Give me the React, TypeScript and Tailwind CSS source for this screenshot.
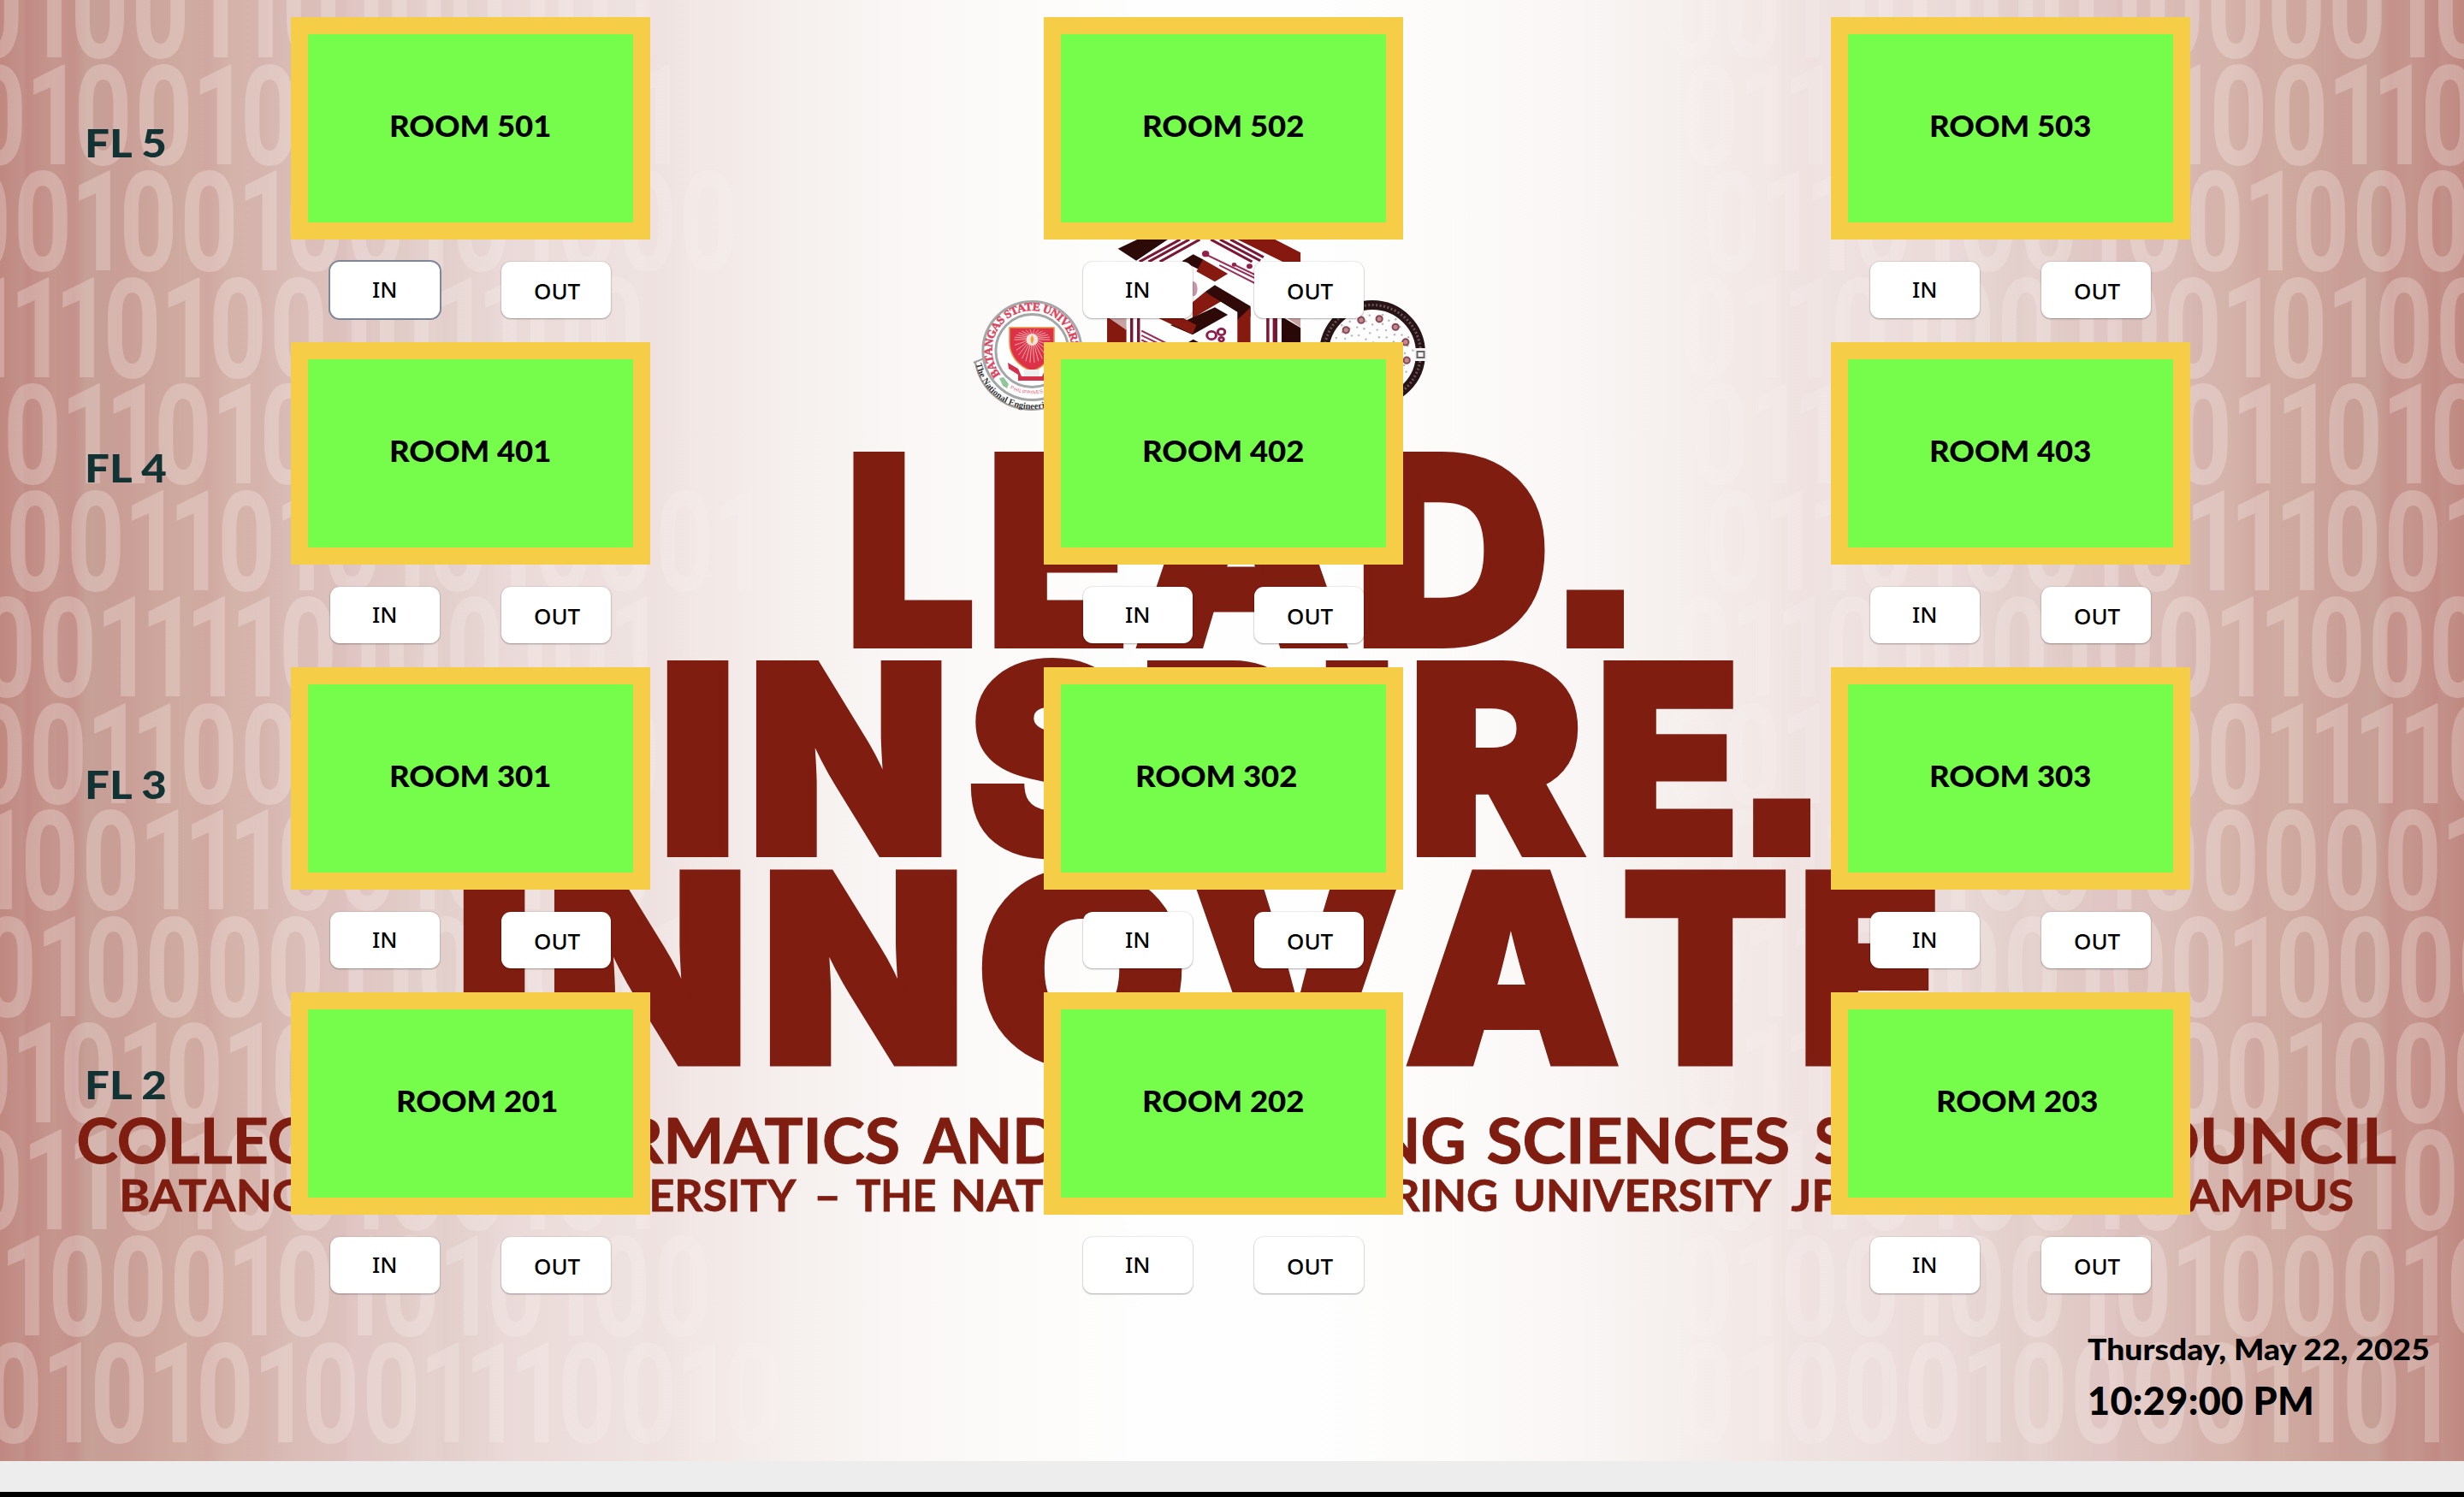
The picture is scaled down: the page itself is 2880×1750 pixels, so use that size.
import React from "react";

/* ---------- glyph fitting for the poster artwork ---------- */

const canvas = document.createElement("canvas");
const ctx = canvas.getContext("2d")!;

type Span = { text: string; from: number; to: number };

const inkOf = (font: string, text: string) => {
  ctx.font = font;
  const m = ctx.measureText(text);
  return {
    advance: m.width,
    left: m.actualBoundingBoxLeft,
    width: m.actualBoundingBoxLeft + m.actualBoundingBoxRight,
    height: m.actualBoundingBoxAscent + m.actualBoundingBoxDescent,
  };
};

/** The poster's full stops are square blocks, 69 units high. */
const DOT_FACE = "Liberation Sans";
const DOT_HEIGHT = 69;

/** Scales every span so that its ink runs from `from` to `to`. */
function FittedLine({
  spans,
  baseline,
  family,
  weight,
  size,
  stroke = 0,
  fill,
}: {
  spans: Span[];
  baseline: number;
  family: string;
  weight: number;
  size: number;
  stroke?: number;
  fill: string;
}) {
  return (
    <text
      y={baseline}
      fontFamily={family}
      fontWeight={weight}
      fontSize={size}
      fill={fill}
      stroke={stroke ? fill : "none"}
      strokeWidth={stroke}
      strokeLinejoin="miter"
    >
      {spans.map((s, i) => {
        const dot = s.text === ".";
        const dotSize = dot
          ? (100 * (DOT_HEIGHT - stroke)) / inkOf(`700 100px "${DOT_FACE}"`, ".").height
          : 0;
        const ink = dot
          ? inkOf(`700 ${dotSize}px "${DOT_FACE}"`, ".")
          : inkOf(`${weight} ${size}px "${family}"`, s.text);
        const k = (s.to - s.from - stroke) / ink.width;
        return (
          <tspan
            key={i}
            x={s.from + stroke / 2 + ink.left * k}
            textLength={ink.advance * k}
            lengthAdjust="spacingAndGlyphs"
            {...(dot ? { fontFamily: DOT_FACE, fontWeight: 700, fontSize: dotSize } : {})}
          >
            {s.text}
          </tspan>
        );
      })}
    </text>
  );
}

const MAROON = "#7f1d10";

const glyphs = (list: [string, number, number][]): Span[] =>
  list.map(([text, from, to]) => ({ text, from, to }));

const LEAD = glyphs([
  ["L", 997, 1139],
  ["E", 1162, 1316],
  ["A", 1327, 1577],
  ["D", 1594, 1810],
  [".", 1829, 1902],
]);
const INSPIRE = glyphs([
  ["I", 780, 853],
  ["N", 884, 1104],
  ["S", 1131, 1322],
  ["P", 1341, 1530],
  ["I", 1550, 1624],
  ["R", 1656, 1852],
  ["E", 1874, 2028],
  [".", 2047, 2120],
]);
const INNOVATE = glyphs([
  ["I", 542, 615],
  ["N", 648, 869],
  ["N", 900, 1122],
  ["O", 1147, 1384],
  ["V", 1390, 1641],
  ["A", 1643, 1893],
  ["T", 1896, 2091],
  ["E", 2110, 2264],
]);
const COLLEGE = glyphs([
  ["COLLEGE", 91, 406],
  ["OF", 437, 520],
  ["INFORMATICS", 548, 1050],
  ["AND", 1078, 1236],
  ["COMPUTING", 1264, 1711],
  ["SCIENCES", 1738, 2090],
  ["STUDENT", 2121, 2433],
  ["COUNCIL", 2461, 2801],
]);
const CAMPUS = glyphs([
  ["BATANGAS", 143, 424],
  ["STATE", 446, 610],
  ["UNIVERSITY", 631, 932],
  ["–", 955, 979],
  ["THE", 1000, 1093],
  ["NATIONAL", 1115, 1388],
  ["ENGINEERING", 1410, 1750],
  ["UNIVERSITY", 1771, 2072],
  ["JPLPC-MALVAR", 2093, 2500],
  ["CAMPUS", 2521, 2750],
]);

/* ---------- binary rain ---------- */

const BITS: [number, string, number, string][] = [
  [-36, "0100110100101", 2584, "00010"],
  [-32, "0100101001001", 2535, "1001100"],
  [-50, "00100100101000", 2560, "010000"],
  [-32, "1110100101100", 2534, "010100"],
  [9, "011010100110", 2546, "011010"],
  [12, "00110101010001", 2563, "111001"],
  [-21, "0011110100101", 2526, "011000"],
  [-32, "0011001011010", 2584, "011110"],
  [-23, "1001110010110", 2578, "00001"],
  [-20, "0100001101001", 2541, "010000"],
  [-49, "0101010100110", 2535, "001000"],
  [-36, "0110100100101", 2564, "010100"],
  [9, "1000101010100", 2352, "010100010"],
  [-13, "010101001110010", 2036, "1000100001101"],
];

const widthOf = (bit: string) => (bit === "0" ? 71 : 52.5);

function bitSpans(start: number, bits: string): Span[] {
  let x = start;
  return bits.split("").map((bit) => {
    const span = { text: bit, from: x, to: x + (bit === "0" ? 57.5 : 37) };
    x += widthOf(bit);
    return span;
  });
}

function extendLeft(start: number, bits: string, limit: number): [number, string] {
  const filler = "0100101100";
  let x = start;
  let out = bits;
  for (let i = 0; x > limit; i++) {
    const bit = filler[i % filler.length];
    x -= widthOf(bit);
    out = bit + out;
  }
  return [x, out];
}

function BinaryRain() {
  return (
    <g>
      {BITS.map(([lx, left, rx, right], i) => {
        const [x, bits] = extendLeft(rx, right, 2000);
        return (
          <FittedLine
            key={i}
            spans={[...bitSpans(lx, left), ...bitSpans(x, bits)]}
            baseline={67 + i * 124.5}
            family="Roboto"
            weight={700}
            size={163}
            fill="url(#rain)"
          />
        );
      })}
    </g>
  );
}

/* ---------- backdrop gradient ---------- */

const HALF: [number, string][] = [
  [0, "#bf8880"],
  [0.9, "#c2918a"],
  [1.1, "#c18b84"],
  [2.2, "#c5968e"],
  [3, "#c4918b"],
  [3.5, "#c6a096"],
  [5, "#c99e97"],
  [6.4, "#cda69d"],
  [7.6, "#cfaba1"],
  [8.4, "#d0a8a1"],
  [9.4, "#d4b3aa"],
  [10.6, "#d6b4ae"],
  [12, "#dabdb7"],
  [14, "#ddc1be"],
  [14.2, "#e0c5c4"],
  [16, "#e0cac6"],
  [17.6, "#e5d2cf"],
  [18, "#e2cecb"],
  [20, "#e7d7d4"],
  [20.2, "#e9d8d7"],
  [22, "#ebdcda"],
  [24, "#eddfde"],
  [26, "#eee3e1"],
  [26.4, "#eee1e0"],
  [28.4, "#f2e8e6"],
  [31, "#f4edeb"],
  [33, "#f6f1ef"],
  [36, "#f9f6f5"],
  [40, "#fcfaf9"],
  [43, "#fdfcfb"],
  [47, "#fefefe"],
];

function Stops() {
  const mirrored = [...HALF].reverse().map(([o, c]) => [100 - o, c] as [number, string]);
  return (
    <>
      {[...HALF, ...mirrored].map(([o, c], i) => (
        <stop key={i} offset={`${o}%`} stopColor={c} />
      ))}
    </>
  );
}

/* ---------- emblems ---------- */

function UniversitySeal() {
  const rays = Array.from({ length: 26 }, (_, i) => (i * Math.PI * 2) / 26);
  return (
    <g>
      <path d="M1141 422 A68 68 0 0 0 1206 478 L1250 462 L1240 445 L1160 440 L1146 418 Z" fill="#fff" />
      <path d="M1140 424 A67 67 0 0 0 1206 479 A67 67 0 0 0 1260 452" fill="none" stroke="#9b9b9b" strokeWidth="2" />
      <path d="M1138 424 L1150 419" stroke="#9b9b9b" strokeWidth="2" />
      <circle cx="1206.4" cy="410" r="57.5" fill="#fff" stroke="#a3a7a8" strokeWidth="3" />
      <circle cx="1206.4" cy="410" r="42.5" fill="#fff" stroke="#a3a7a8" strokeWidth="3" />
      <path id="sealArc" d="M1169.4 438 A46.5 46.5 0 1 1 1243 438" fill="none" />
      <text
        fontFamily="Liberation Serif"
        fontWeight="700"
        fontSize="13.5"
        fill="#e0435c"
        stroke="#e0435c"
        strokeWidth="0.5"
      >
        <textPath href="#sealArc" textLength="196">
          BATANGAS STATE UNIVERSITY
        </textPath>
      </text>
      <path id="tagArc" d="M1142 425 A65 65 0 0 0 1268 430" fill="none" />
      <text fontFamily="Liberation Serif" fontWeight="700" fontSize="10.5" fill="#333" dy="1.5">
        <textPath href="#tagArc" textLength="164">
          The National Engineering University
        </textPath>
      </text>
      <path id="seatArc" d="M1176 446 A47 47 0 0 0 1236 446" fill="none" />
      <text fontFamily="Liberation Sans" fontSize="6" fill="#e0637a" dy="4">
        <textPath href="#seatArc" startOffset="8">PHILIPPINES</textPath>
      </text>
      <path d="M1168 442 l5 -1 6 8 -2 5 -5 -3z" fill="#8fc79b" />
      <path
        d="M1180 383 H1232 V400 C1232 416 1222 428 1206.400 434 C1190 428 1180 416 1180 400 Z"
        fill="#dc3149"
        stroke="#e8923f"
        strokeWidth="1.6"
      />
      <g stroke="#f3b9b6" strokeWidth="0.9">
        {rays.map((a, i) => (
          <line
            key={i}
            x1={1206.4 + Math.cos(a) * 7}
            y1={397 + Math.sin(a) * 7}
            x2={1206.4 + Math.cos(a) * 21}
            y2={397 + Math.sin(a) * (Math.sin(a) < 0 ? 12 : 27)}
          />
        ))}
      </g>
      <circle cx="1206.4" cy="397" r="7" fill="#fbe3df" />
      <path d="M1206.400 392 q3.600 5 0 10 q-3.600 -5 0 -10" fill="#f0a136" />
      <path d="M1178 424 l12 7 4 9 h24 l4 -9 12 -7 -2 8 -8 6 v7 h-34 v-7 l-11 -7z" fill="#d5304a" />
      <rect x="1197" y="432" width="18" height="8" fill="#eee" />
    </g>
  );
}

function CouncilLogo() {
  return (
    <g transform="translate(1100 270) scale(0.38265 0.33333)">
      {/* outer hexagon */}
      <path d="M540 62 L610 24 H700 L596 104 Z" fill="#2c0a08" />
      <path d="M1010 24 L1098 76 V112 H1050 L895 24 Z" fill="#85190f" />
      <path d="M507 300 L566 345 V395 H507 Z" fill="#86190f" />
      <path d="M507 300 h59 v48z" fill="#c9a3a3" />
      <path d="M1040 300 L1098 340 V395 H1040 Z" fill="#2a0808" />
      <path d="M1050 300 h48 v38z" fill="#c9a3a3" />
      {/* circuit bands */}
      <g stroke="#7b1634" strokeWidth="9" fill="none">
        <path d="M606 108 L730 30" />
        <path d="M634 108 L758 30" />
        <path d="M668 108 L790 30" />
        <path d="M824 30 L950 108" />
        <path d="M852 30 L975 104" />
        <path d="M884 30 L985 92" />
        <path d="M582 300 V395" />
        <path d="M603 300 V395" />
        <path d="M998 300 V395" />
        <path d="M1020 300 V395" strokeWidth="14" />
      </g>
      <g stroke="#9b2a55" strokeWidth="6" fill="none">
        <path d="M808 82 L960 166" />
        <path d="M895 118 L960 154" />
        <path d="M850 120 L960 184" />
        <path d="M612 350 L690 395" />
        <path d="M612 366 L664 395" />
        <path d="M612 382 L636 395" />
      </g>
      <circle cx="808" cy="80" r="11" fill="#94204a" />
      <circle cx="895" cy="118" r="7" fill="#94204a" />
      <circle cx="942" cy="124" r="9" fill="#94204a" />
      <ellipse cx="771" cy="203" rx="12" ry="26" fill="#c995ab" />
      {/* folded ribbon */}
      <path d="M736 106 L770 82 L800 100 V128 L786 134 Z" fill="#2d0a08" />
      <path d="M800 100 L876 150 L836 178 L780 142 Z" fill="#861a10" />
      <path d="M768 250 L806 214 L860 244 L768 306 Z" fill="#861a10" />
      <path d="M836 190 L945 264 V300 L905 312 V284 L806 214 Z" fill="#2f0a09" />
      <path d="M905 312 L945 268 V395 H905 Z" fill="#861a10" />
      <path d="M740 318 L836 268 L876 294 L768 364 L700 330 Z" fill="#2d0a08" />
      <path d="M664 306 H740 L780 330 L768 362 Z" fill="#861a10" />
      <path d="M752 392 L770 380 L790 392 Z" fill="#2d0a08" />
      <g fill="none" stroke="#8d1e4b" strokeWidth="8">
        <circle cx="826" cy="366" r="14" />
        <circle cx="856" cy="354" r="11" />
        <circle cx="856" cy="380" r="7" />
      </g>
    </g>
  );
}

function RoundSeal() {
  const dots = Array.from({ length: 12 }, (_, i) => (i * Math.PI) / 6 + 0.2);
  const specks = Array.from({ length: 90 }, (_, i) => ({
    a: i * 2.4,
    r: 4 + Math.sqrt(i) * 4.6,
  }));
  return (
    <g>
      <circle cx="1604" cy="413" r="56.5" fill="#fdfdfd" stroke="#281416" strokeWidth="11" />
      <circle
        cx="1604"
        cy="413"
        r="56.5"
        fill="none"
        stroke="#6b5557"
        strokeWidth="3"
        strokeDasharray="2 2.500"
      />
      <g fill="#b4b4b4">
        {specks.map((s, i) => (
          <circle key={i} cx={1604 + Math.cos(s.a) * s.r} cy={411 + Math.sin(s.a) * s.r} r="1.2" />
        ))}
      </g>
      <g fill="#c08a92" stroke="#8a4650" strokeWidth="2">
        {dots.map((a, i) => (
          <circle key={i} cx={1604 + Math.cos(a) * 41} cy={413 + Math.sin(a) * 41} r="3.600" />
        ))}
      </g>
      <rect x="1653" y="407" width="15" height="15" fill="#f4f4f4" />
      <rect x="1656.500" y="411" width="8" height="7" fill="none" stroke="#666" strokeWidth="2" />
    </g>
  );
}

function Backdrop() {
  return (
    <svg className="absolute inset-0" width="2880" height="1708" viewBox="0 0 2880 1708" aria-hidden="true">
      <defs>
        <linearGradient id="sky" x1="0" x2="1" y1="0" y2="0">
          <Stops />
        </linearGradient>
        <linearGradient id="rain" gradientUnits="userSpaceOnUse" x1="0" x2="2880" y1="0" y2="0">
          <stop offset="0" stopColor="#fffaf7" stopOpacity="0.25" />
          <stop offset="0.12" stopColor="#fffaf7" stopOpacity="0.25" />
          <stop offset="0.24" stopColor="#fffaf7" stopOpacity="0.18" />
          <stop offset="0.34" stopColor="#fffaf7" stopOpacity="0.06" />
          <stop offset="0.66" stopColor="#fffaf7" stopOpacity="0.06" />
          <stop offset="0.76" stopColor="#fffaf7" stopOpacity="0.18" />
          <stop offset="0.88" stopColor="#fffaf7" stopOpacity="0.25" />
          <stop offset="1" stopColor="#fffaf7" stopOpacity="0.25" />
        </linearGradient>
      </defs>
      <rect width="2880" height="1708" fill="url(#sky)" />
      <BinaryRain />
      <UniversitySeal />
      <RoundSeal />
      <CouncilLogo />
      <FittedLine spans={LEAD} baseline={754} family="Inter" weight={900} size={305} stroke={8} fill={MAROON} />
      <FittedLine spans={INSPIRE} baseline={998} family="Inter" weight={900} size={305} stroke={8} fill={MAROON} />
      <FittedLine spans={INNOVATE} baseline={1242.5} family="Inter" weight={900} size={305} stroke={8} fill={MAROON} />
      <FittedLine spans={COLLEGE} baseline={1360} family="Lato" weight={700} size={72} stroke={1} fill={MAROON} />
      <FittedLine spans={CAMPUS} baseline={1415.5} family="Lato" weight={700} size={52} stroke={0.8} fill={MAROON} />
    </svg>
  );
}

/* ---------- room board ---------- */

type Room = { name: string; pad: string };
type Floor = { name: string; labelPad: string; rooms: Room[] };

const NORMAL = "pl-[95px]";
const SHIFT_RIGHT = "pl-[103px]";
const SHIFT_LEFT = "pl-[87px]";

const FLOORS: Floor[] = [
  {
    name: "FL 5",
    labelPad: "pt-[124px]",
    rooms: [
      { name: "ROOM 501", pad: NORMAL },
      { name: "ROOM 502", pad: NORMAL },
      { name: "ROOM 503", pad: NORMAL },
    ],
  },
  {
    name: "FL 4",
    labelPad: "pt-[124px]",
    rooms: [
      { name: "ROOM 401", pad: NORMAL },
      { name: "ROOM 402", pad: NORMAL },
      { name: "ROOM 403", pad: NORMAL },
    ],
  },
  {
    name: "FL 3",
    labelPad: "pt-[114px]",
    rooms: [
      { name: "ROOM 301", pad: NORMAL },
      { name: "ROOM 302", pad: SHIFT_LEFT },
      { name: "ROOM 303", pad: NORMAL },
    ],
  },
  {
    name: "FL 2",
    labelPad: "pt-[85px]",
    rooms: [
      { name: "ROOM 201", pad: SHIFT_RIGHT },
      { name: "ROOM 202", pad: NORMAL },
      { name: "ROOM 203", pad: SHIFT_RIGHT },
    ],
  },
];

const COLUMN_GAP = ["", "ml-[460px]", "ml-[500px]"];

const BUTTON =
  "flex h-[66px] w-[128px] items-start rounded-[11px] bg-white font-['Noto_Sans',sans-serif] text-[26px] leading-none font-medium text-black";
const RAISED = "shadow-[0_0_1px_1px_rgba(0,0,0,0.07),0_1px_2px_rgba(0,0,0,0.28)]";
const FOCUSED = "shadow-[0_0_0_2px_#7d8798]";

function RoomCell({ room, gap, focused }: { room: Room; gap: string; focused: boolean }) {
  return (
    <div className={`w-[420px] shrink-0 ${gap}`}>
      <div
        className={`h-[260px] border-20 border-[#f6cd46] bg-[#76fd4c] pt-[90px] text-[34.5px] leading-none font-black whitespace-nowrap text-black ${room.pad}`}
      >
        <span className="block w-fit origin-left scale-x-[1.058]">{room.name}</span>
      </div>
      <div className="flex gap-[72px] pt-[26px] pl-[46px]">
        <button className={`${BUTTON} pt-[19px] pl-[49px] ${focused ? FOCUSED : RAISED}`}>IN</button>
        <button className={`${BUTTON} pt-[21px] pl-[38px] ${RAISED}`}>OUT</button>
      </div>
    </div>
  );
}

export default function App() {
  return (
    <div className="flex h-[1750px] w-[2880px] flex-col overflow-hidden bg-black font-['Lato',sans-serif]">
      <main className="relative h-[1708px] shrink-0 overflow-hidden">
        <Backdrop />
        <div className="relative flex flex-col pt-5">
          {FLOORS.map((floor, f) => (
            <section key={floor.name} className="flex h-[380px]">
              <h2
                className={`w-[340px] shrink-0 pl-[99px] text-[46px] leading-none font-black text-[#123334] ${floor.labelPad}`}
              >
                <span className="block w-fit origin-left scale-x-[1.11]">{floor.name}</span>
              </h2>
              {floor.rooms.map((room, r) => (
                <RoomCell key={room.name} room={room} gap={COLUMN_GAP[r]} focused={f === 0 && r === 0} />
              ))}
            </section>
          ))}
          <footer className="flex flex-col pl-[2440px] font-black whitespace-nowrap text-black">
            <div className="pt-5 text-[34px] leading-none">
              <span className="block w-fit origin-left scale-x-[1.097]">Thursday, May 22, 2025</span>
            </div>
            <div className="pt-[21px] text-[45px] leading-none tracking-[0.3px]">10:29:00 PM</div>
          </footer>
        </div>
      </main>
      <div className="h-9 shrink-0 bg-[#ededed]" />
    </div>
  );
}
